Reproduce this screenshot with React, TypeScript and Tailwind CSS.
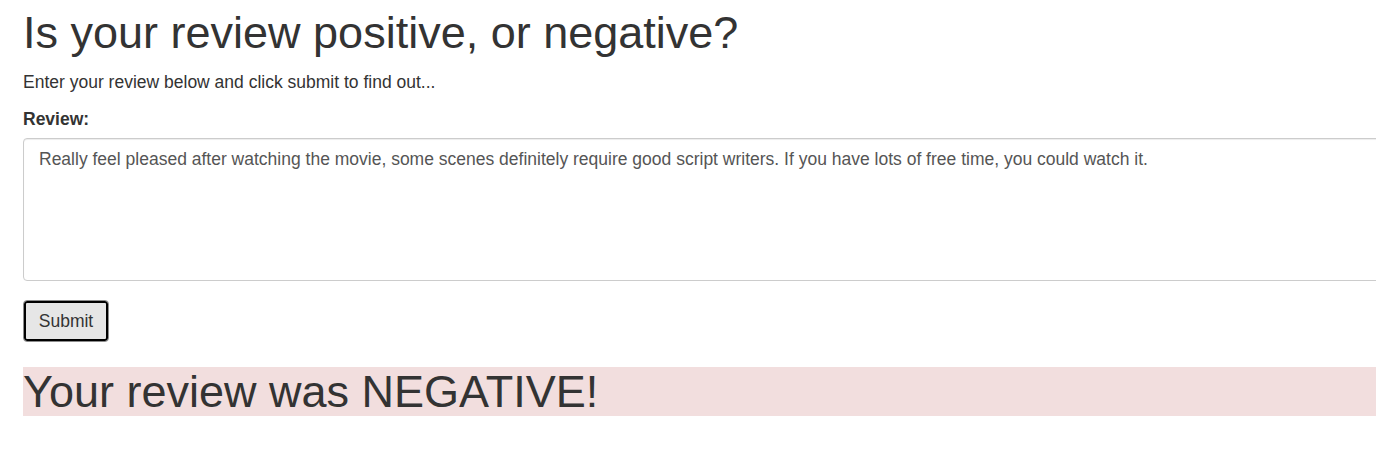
export default function App() {
  const font = { fontFamily: '"Liberation Sans", Arial, sans-serif' };
  return (
    <div
      className="w-[1376px] h-[450px] overflow-hidden bg-white text-[#333] text-[17.5px] leading-[25px]"
      style={font}
    >
      <div className="w-[1420px] pl-[23px]">
        <h1 className="pt-[8px] text-[45px] leading-[49.5px] font-normal">
          Is your review positive, or negative?
        </h1>
        <p className="mt-[12px]">Enter your review below and click submit to find out...</p>
        <div className="mt-[12.5px] font-bold">Review:</div>
        <textarea
          className="mt-[6px] block w-full h-[143px] resize-none rounded-[4px] border border-[#ccc] px-[15px] pt-[8px] text-[17.5px] leading-[25px] text-[#555] shadow-[inset_0_1px_1px_rgba(0,0,0,0.075)] outline-none"
          style={font}
          defaultValue="Really feel pleased after watching the movie, some scenes definitely require good script writers. If you have lots of free time, you could watch it."
        />
        <button
          className="mt-[19px] block w-[86px] h-[42px] rounded-[4px] border border-[#8c8c8c] bg-[#e6e6e6] text-[17.5px] leading-[25px] text-[#333] shadow-[inset_0_0_0_2px_#000]"
          style={font}
        >
          Submit
        </button>
        <div className="mt-[25px] h-[48.5px] bg-[#f2dede] text-[45px] leading-[49.5px]">
          Your review was NEGATIVE!
        </div>
      </div>
    </div>
  );
}
